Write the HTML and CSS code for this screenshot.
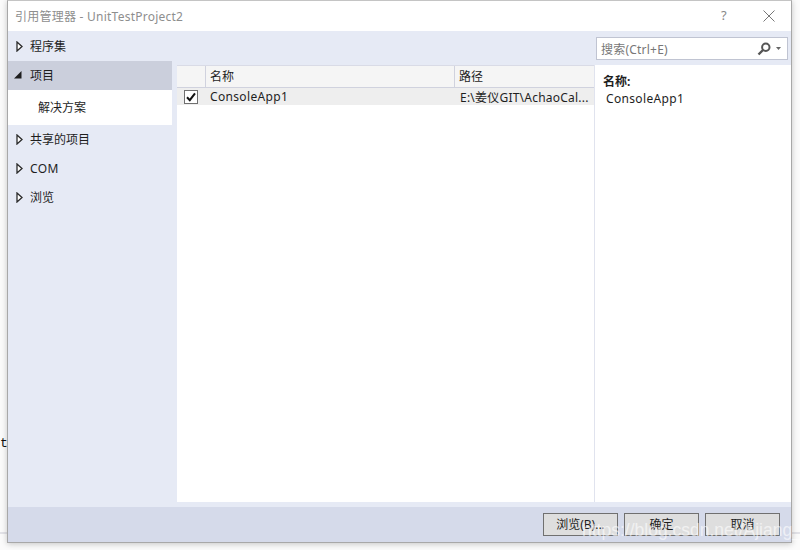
FILE: index.html
```html
<!DOCTYPE html>
<html lang="zh">
<head>
<meta charset="utf-8">
<title>引用管理器</title>
<link rel="stylesheet" href="styles.css">
</head>
<body>
<div class="desktop">
  <div class="backdrop-strip"></div>
  <span class="stray-text">t:</span>
  <div class="dialog">
    <header class="titlebar">
      <span class="title">引用管理器 - UnitTestProject2</span>
      <span class="help">?</span>
      <svg class="close" width="12" height="12" viewBox="0 0 12 12"><path d="M.5.5l11 11M11.500.5l-11 11" stroke="#777" fill="none"/></svg>
    </header>
    <div class="body">
      <nav class="sidebar">
        <div class="nav-row"><svg class="tri" width="7" height="11" viewBox="0 0 7 11"><path d="M1 1l5 4.500-5 4.500z" fill="#fff" stroke="#2a2a2a" stroke-width="1.300"/></svg>程序集</div>
        <div class="nav-row selected"><svg class="tri" width="8" height="8" viewBox="0 0 8 8"><path d="M0 7.500L7.500 0v7.500z" fill="#1e1e1e"/></svg>项目</div>
        <div class="nav-sub">解决方案</div>
        <div class="nav-row"><svg class="tri" width="7" height="11" viewBox="0 0 7 11"><path d="M1 1l5 4.500-5 4.500z" fill="#fff" stroke="#2a2a2a" stroke-width="1.300"/></svg>共享的项目</div>
        <div class="nav-row wide"><svg class="tri" width="7" height="11" viewBox="0 0 7 11"><path d="M1 1l5 4.500-5 4.500z" fill="#fff" stroke="#2a2a2a" stroke-width="1.300"/></svg>COM</div>
        <div class="nav-row"><svg class="tri" width="7" height="11" viewBox="0 0 7 11"><path d="M1 1l5 4.500-5 4.500z" fill="#fff" stroke="#2a2a2a" stroke-width="1.300"/></svg>浏览</div>
      </nav>
      <section class="center">
        <div class="table-head">
          <div class="th th-check"></div>
          <div class="th th-name">名称</div>
          <div class="th th-path">路径</div>
        </div>
        <div class="table-row">
          <div class="td-check"><svg width="14" height="14" viewBox="0 0 14 14"><rect x=".5" y=".5" width="13" height="13" fill="#fff" stroke="#707070"/><path d="M3 7.200l2.800 3L11 3.400" fill="none" stroke="#111" stroke-width="2"/></svg></div>
          <div class="td-name wide">ConsoleApp1</div>
          <div class="td-path latin">E:\姜仪GIT\AchaoCal...</div>
        </div>
      </section>
      <aside class="right">
        <div class="search">
          <span class="search-text latin">搜索(Ctrl+E)</span>
          <svg class="search-icon" width="14" height="14" viewBox="0 0 14 14"><circle cx="8.800" cy="5.200" r="3.700" fill="none" stroke="#555" stroke-width="2"/><path d="M6 8L1.500 12.500" stroke="#555" stroke-width="2.400" fill="none"/></svg>
          <svg class="search-caret" width="5" height="3" viewBox="0 0 5 3"><path d="M0 0h5L2.500 3z" fill="#666"/></svg>
        </div>
        <div class="details">
          <div class="detail-label">名称:</div>
          <div class="detail-value wide">ConsoleApp1</div>
        </div>
      </aside>
    </div>
    <footer class="footer">
      <button class="btn">浏览(B)...</button>
      <button class="btn">确定</button>
      <button class="btn">取消</button>
    </footer>
    <span class="watermark">https://blog.csdn.net/Ajiang__</span>
  </div>
</div>
</body>
</html>
```
FILE: styles.css
```css
* { box-sizing: border-box; }
html, body { margin: 0; padding: 0; }
body {
  width: 800px;
  height: 550px;
  overflow: hidden;
  background: #fbfbfb;
  font-family: "Noto Sans", "Noto Sans CJK SC", sans-serif;
  font-size: 12px;
  color: #1e1e1e;
}
.latin { letter-spacing: .22px; }
.wide { letter-spacing: .34px; }
.desktop {
  position: relative;
  width: 800px;
  height: 550px;
  padding-left: 7px;
}
.backdrop-strip {
  position: absolute;
  left: 0;
  right: 0;
  top: 532px;
  height: 2px;
  background: #e3e3e8;
}
.stray-text {
  position: absolute;
  left: 0;
  top: 436px;
  font-family: "Liberation Mono", monospace;
  font-size: 13px;
  color: #111;
}
.dialog {
  position: relative;
  width: 785px;
  height: 543px;
  display: flex;
  flex-direction: column;
  background: #fff;
  border: 1px solid #a8a8a8;
  border-top-color: #c4c4c4;
  box-shadow: 0 1px 6px rgba(0, 0, 0, .22);
}
.titlebar {
  height: 30px;
  flex: none;
  display: flex;
  align-items: center;
  padding: 0 16px 0 7px;
  background: #fff;
}
.title { flex: 1; font-size: 12px; color: #8e8e8e; letter-spacing: .24px; padding-bottom: 1px; }
.help { width: 42px; font-size: 13px; color: #888; padding-bottom: 3px; }
.body {
  flex: 1;
  display: flex;
  min-height: 0;
  background: #e6eaf5;
  padding-bottom: 5px;
}
.sidebar {
  width: 164px;
  flex: none;
  padding-top: 1px;
  margin-right: 5px;
}
.nav-row {
  height: 29px;
  display: flex;
  align-items: center;
  padding: 0 0 1px 8px;
  font-size: 12px;
  color: #1e1e1e;
}
.nav-row .tri { flex: none; margin-right: 7px; }
.nav-row.selected { background: #cbcfdc; padding-left: 6px; }
.nav-row.selected .tri { margin-right: 8px; }
.nav-sub {
  height: 35px;
  display: flex;
  align-items: center;
  padding: 0 0 1px 30px;
  background: #fff;
}
.center {
  width: 417px;
  flex: none;
  margin-top: 34px;
  background: #fff;
}
.table-head {
  display: flex;
  height: 23px;
  background: #f5f5f5;
  border-top: 1px solid #d9dbe6;
  border-bottom: 1px solid #d0d2de;
}
.th { display: flex; align-items: center; padding: 0 0 1px 4px; }
.th-check { width: 29px; border-right: 1px solid #d0d2de; }
.th-name { width: 249px; border-right: 1px solid #d0d2de; }
.th-path { flex: 1; }
.table-row {
  display: flex;
  align-items: center;
  height: 17px;
  background: #eeeeee;
}
.td-check { width: 28px; padding-left: 7px; display: flex; align-items: center; }
.td-name { width: 250px; padding-left: 5px; }
.td-path { flex: 1; padding-left: 5px; white-space: nowrap; overflow: hidden; }
.right {
  flex: 1;
  display: flex;
  flex-direction: column;
}
.search {
  flex: none;
  height: 23px;
  width: 192px;
  margin: 6px 0 5px 2px;
  display: flex;
  align-items: center;
  padding: 0 4px;
  background: #fff;
  border: 1px solid #c0c4d2;
}
.search-text { flex: 1; color: #777; }
.search-icon { margin-right: 5px; }
.search-caret { margin-right: 2px; }
.details {
  flex: 1;
  background: #fff;
  border-left: 1px solid #e0e3ee;
  padding: 8px 8px;
  line-height: 17px;
}
.detail-label { font-weight: 700; }
.detail-value { padding-left: 3px; }
.footer {
  flex: none;
  height: 35px;
  display: flex;
  justify-content: flex-end;
  align-items: flex-start;
  gap: 6px;
  padding: 6px 11px 0 0;
  background: #d5daea;
}
.btn {
  width: 75px;
  height: 23px;
  padding: 0 0 2px;
  font: inherit;
  color: #1e1e1e;
  background: #dedede;
  border: 1px solid #707070;
}
.watermark {
  position: absolute;
  left: 574px;
  top: 519px;
  font-family: "Liberation Sans", sans-serif;
  font-size: 17.500px;
  color: rgba(255, 255, 255, .6);
  white-space: nowrap;
}
```
